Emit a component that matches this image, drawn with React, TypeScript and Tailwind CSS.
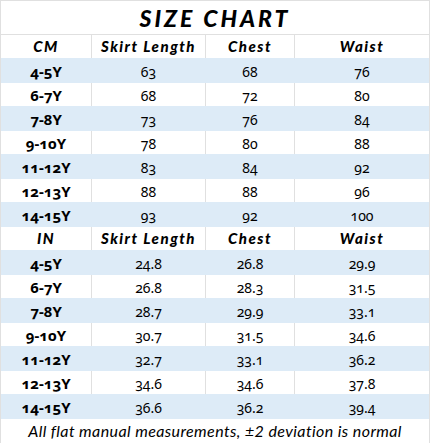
import React from "react";

const cm: [string, string, string, string][] = [
  ["4-5Y", "63", "68", "76"],
  ["6-7Y", "68", "72", "80"],
  ["7-8Y", "73", "76", "84"],
  ["9-10Y", "78", "80", "88"],
  ["11-12Y", "83", "84", "92"],
  ["12-13Y", "88", "88", "96"],
  ["14-15Y", "93", "92", "100"],
];
const inch: [string, string, string, string][] = [
  ["4-5Y", "24.8", "26.8", "29.9"],
  ["6-7Y", "26.8", "28.3", "31.5"],
  ["7-8Y", "28.7", "29.9", "33.1"],
  ["9-10Y", "30.7", "31.5", "34.6"],
  ["11-12Y", "32.7", "33.1", "36.2"],
  ["12-13Y", "34.6", "34.6", "37.8"],
  ["14-15Y", "36.6", "36.2", "39.4"],
];

const hand = "font-['Lato',sans-serif] italic font-black tracking-[1.5px]";
const body = "font-['Noto_Sans',sans-serif] oldstyle-nums";

function HeaderRow({ unit }: { unit: string }) {
  const c = `flex items-center justify-center border-r border-[#e0e0e0] text-[15px] text-black ${hand}`;
  return (
    <div className="flex h-[23px] bg-white">
      <div className={`${c} w-[91px]`}>{unit}</div>
      <div className={`${c} w-[114px]`}>Skirt Length</div>
      <div className={`${c} w-[89px]`}>Chest</div>
      <div className={`${c} w-[134px] border-r-0`}>Waist</div>
    </div>
  );
}

function DataRow({ r, blue }: { r: [string, string, string, string]; blue: boolean }) {
  const base = `flex items-center justify-center pt-[2px] text-black border-r ${
    blue ? "border-transparent" : "border-[#e0e0e0]"
  }`;
  return (
    <div className={`flex ${blue ? "h-[25px] bg-[#ddebf7]" : "h-[23px] bg-white"}`}>
      <div className={`${base} w-[91px] text-[15px] font-bold ${body}`}>{r[0]}</div>
      <div className={`${base} w-[114px] text-[14px] ${body}`}>{r[1]}</div>
      <div className={`${base} w-[89px] text-[14px] ${body}`}>{r[2]}</div>
      <div className={`${base} w-[134px] border-r-0 text-[14px] ${body}`}>{r[3]}</div>
    </div>
  );
}

export default function App() {
  return (
    <div className="w-[430px] h-[443px] overflow-hidden bg-white">
      <div className="border-l border-r border-t border-[#e0e0e0]">
        <div className="flex h-[34px] items-center justify-center border-b border-[#e0e0e0] pt-[2px]">
          <span className={`text-[23px] text-black ${hand} tracking-[3px]`}>SIZE CHART</span>
        </div>
        <HeaderRow unit="CM" />
        {cm.map((r, i) => (
          <DataRow key={"c" + i} r={r} blue={i % 2 === 0} />
        ))}
        <HeaderRow unit="IN" />
        {inch.map((r, i) => (
          <DataRow key={"i" + i} r={r} blue={i % 2 === 0} />
        ))}
        <div className="flex h-[24px] items-center justify-center">
          <span className="font-['Lato',sans-serif] italic text-[16px] tracking-[0.4px] text-black">
            All flat manual measurements, ±2 deviation is normal
          </span>
        </div>
      </div>
    </div>
  );
}
